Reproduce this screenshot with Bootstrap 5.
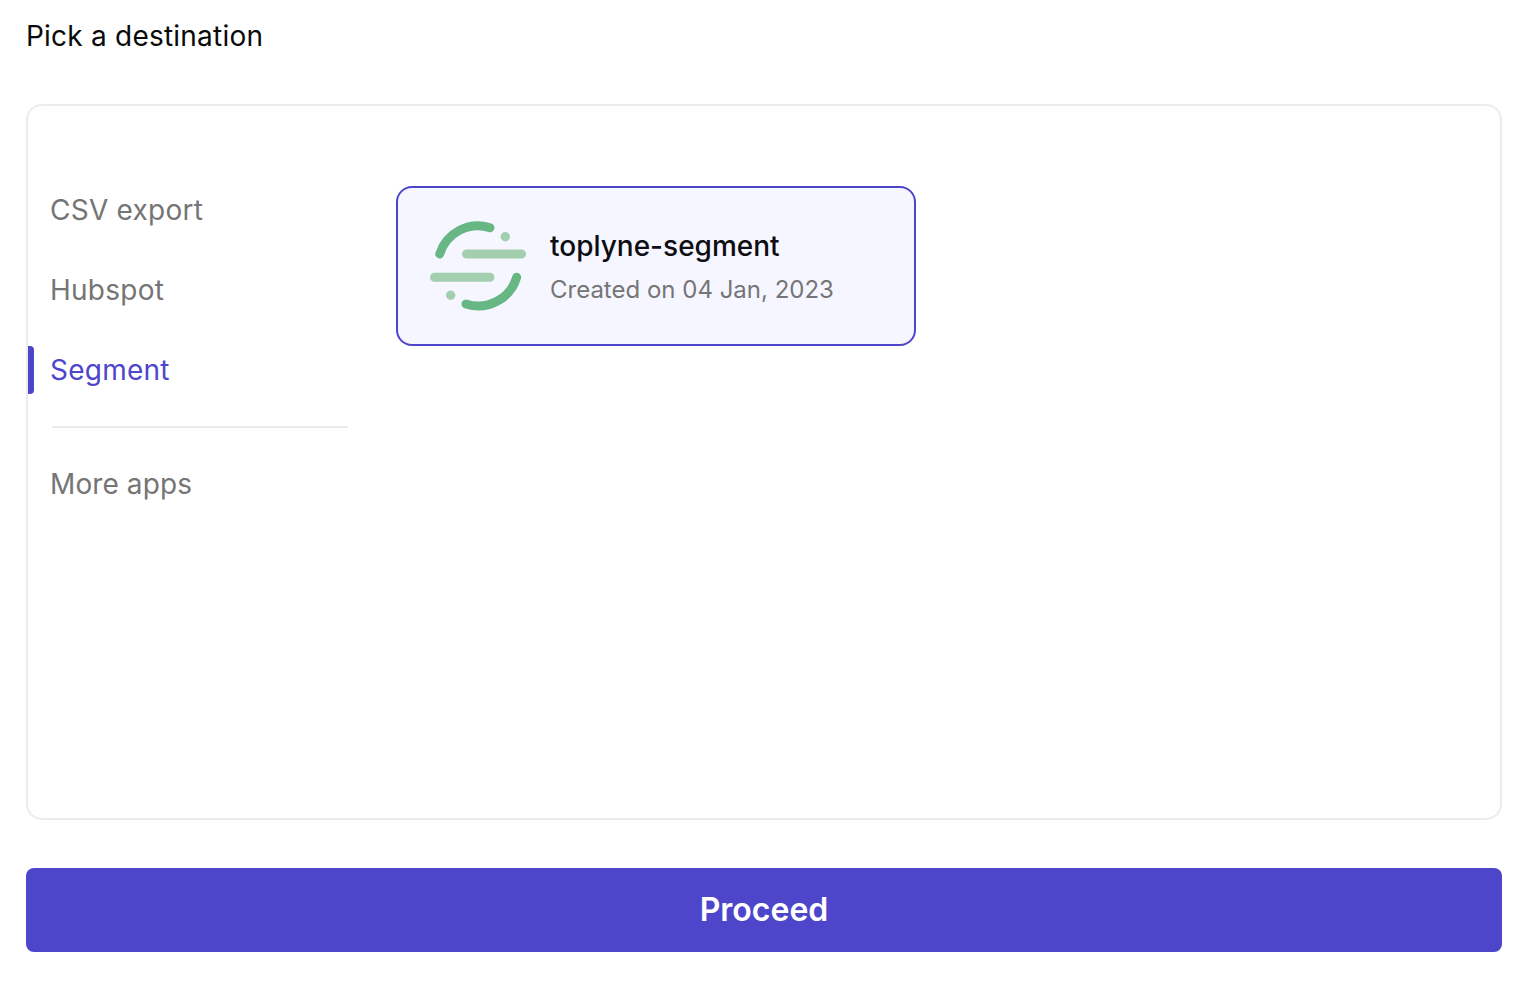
<!DOCTYPE html>
<html lang="en">
<head>
<meta charset="utf-8">
<title>Pick a destination</title>
<link href="https://cdn.jsdelivr.net/npm/bootstrap@5.3.0/dist/css/bootstrap.min.css" rel="stylesheet">
<style>
body { font-family: Inter, "Liberation Sans", sans-serif; background: #fff; height: 986px; overflow: hidden; }
.page-wrap { padding: 16px 28px 0 26px; }
.pick-title { font-size: 28px; line-height: 40px; font-weight: 400; letter-spacing: .22px; color: #0a0a0a; margin: 0 0 48px; }
.dest-panel { height: 716px; border: 2px solid #ececec; border-radius: 16px; padding: 64px 0 0 0; }
.side-nav { width: 320px; flex: none; }
.side-item { position: relative; height: 80px; display: flex; align-items: center; padding: 0 0 0 22px; font-size: 28px; letter-spacing: .25px; color: #757575; text-decoration: none; }
.side-item.is-active { color: #4d46cb; }
.side-item.is-active::before { content: ""; position: absolute; left: 0; top: 16px; width: 6px; height: 48px; background: #4d46cb; border-radius: 0 4px 4px 0; }
.side-rule { height: 2px; background: #e9ebef; margin: 16px 0 16px 24px; width: 296px; opacity: 1; border: 0; }
.side-item.more { height: 80px; letter-spacing: .1px; }
.app-list { padding: 16px 0 0 48px; }
.app-tile { width: 520px; height: 160px; border: 2px solid #4d46cb; border-radius: 16px; background: #f5f6ff; padding: 0 0 0 32px; gap: 24px; }
.tile-name { font-size: 28px; line-height: 36px; font-weight: 500; color: #0d0d12; padding-top: 3px; }
.tile-date { font-size: 24px; line-height: 34px; color: #757575; margin-top: 9px; }
.proceed-btn { margin-top: 48px; height: 84px; width: 100%; background: #4d46cb; border: 0; border-radius: 8px; font-size: 32px; font-weight: 600; color: #fff; padding: 0 12px; }
.proceed-btn:hover { background: #4d46cb; color: #fff; }
</style>
</head>
<body>
<div class="page-wrap">
  <h1 class="pick-title">Pick a destination</h1>
  <div class="dest-panel d-flex">
    <nav class="side-nav">
      <a class="side-item" href="#">CSV export</a>
      <a class="side-item" href="#">Hubspot</a>
      <a class="side-item is-active" href="#">Segment</a>
      <hr class="side-rule">
      <a class="side-item more" href="#">More apps</a>
    </nav>
    <div class="app-list">
      <div class="app-tile d-flex align-items-center">
        <svg width="96" height="92" viewBox="430 220 96 92" fill="none" stroke-linecap="round" aria-hidden="true">
          <path d="M439.7 254 A40 40 0 0 1 490 227.7" stroke="#66b783" stroke-width="9"/>
          <path d="M516.7 277.3 A40 40 0 0 1 466 304" stroke="#66b783" stroke-width="9"/>
          <path d="M466.5 254 H521.5 M434.5 277.3 H490" stroke="#a3cfae" stroke-width="9"/>
          <circle cx="505.3" cy="236.7" r="4.7" fill="#a3cfae"/>
          <circle cx="450.7" cy="295.3" r="4.7" fill="#a3cfae"/>
        </svg>
        <div>
          <div class="tile-name">toplyne-segment</div>
          <div class="tile-date">Created on 04 Jan, 2023</div>
        </div>
      </div>
    </div>
  </div>
  <button type="button" class="btn proceed-btn">Proceed</button>
</div>
<script src="https://cdn.jsdelivr.net/npm/bootstrap@5.3.0/dist/js/bootstrap.bundle.min.js"></script>
</body>
</html>
